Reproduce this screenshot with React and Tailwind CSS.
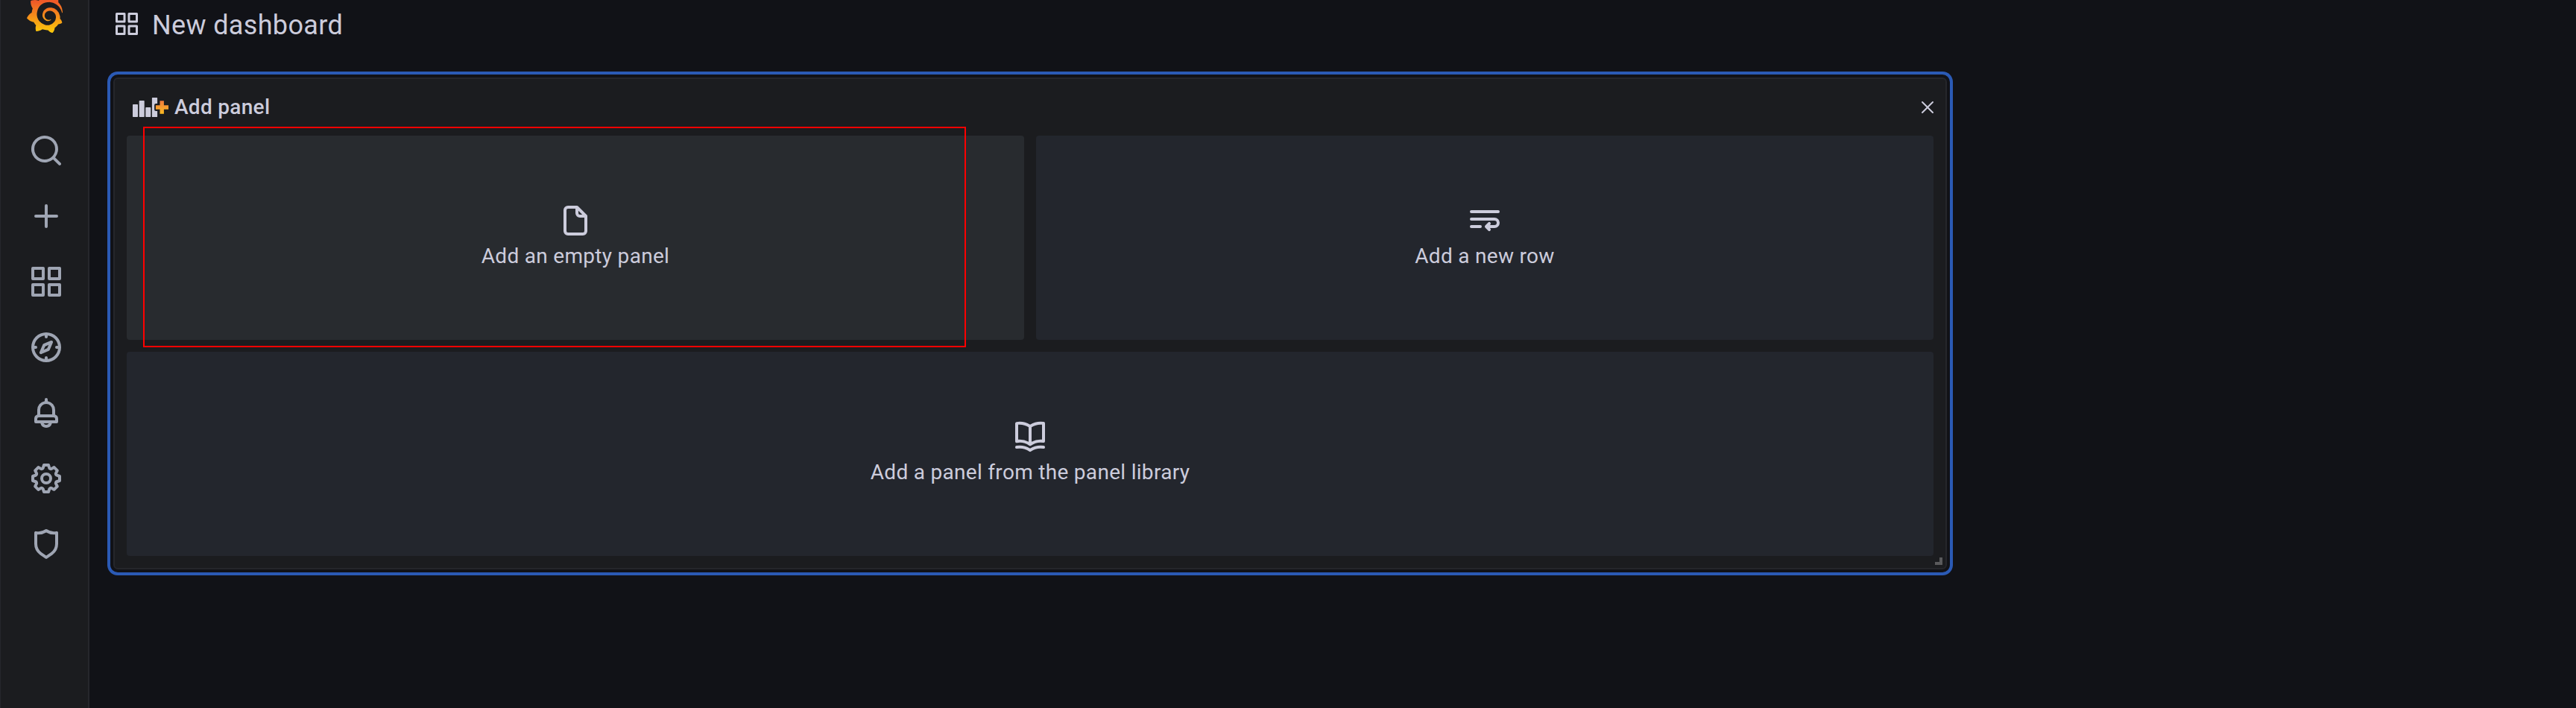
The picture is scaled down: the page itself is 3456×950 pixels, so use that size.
import React from "react";
import { SiGrafana } from "react-icons/si";

const PATHS = {
  search:
    "M21.71,20.29,18,16.61A9,9,0,1,0,16.61,18l3.68,3.68a1,1,0,0,0,1.42,0A1,1,0,0,0,21.71,20.29ZM11,18a7,7,0,1,1,7-7A7,7,0,0,1,11,18Z",
  plus: "M19,11H13V5a1,1,0,0,0-2,0v6H5a1,1,0,0,0,0,2h6v6a1,1,0,0,0,2,0V13h6a1,1,0,0,0,0-2Z",
  apps: "M10,13H3a1,1,0,0,0-1,1v7a1,1,0,0,0,1,1h7a1,1,0,0,0,1-1V14A1,1,0,0,0,10,13ZM9,20H4V15H9ZM21,2H14a1,1,0,0,0-1,1v7a1,1,0,0,0,1,1h7a1,1,0,0,0,1-1V3A1,1,0,0,0,21,2ZM20,9H15V4h5Zm1,4H14a1,1,0,0,0-1,1v7a1,1,0,0,0,1,1h7a1,1,0,0,0,1-1V14A1,1,0,0,0,21,13Zm-1,7H15V15h5ZM10,2H3A1,1,0,0,0,2,3v7a1,1,0,0,0,1,1h7a1,1,0,0,0,1-1V3A1,1,0,0,0,10,2ZM9,9H4V4H9Z",
  compass:
    "M12,2A10,10,0,1,0,22,12,10,10,0,0,0,12,2Zm1,17.93V19a1,1,0,0,0-2,0v.93A8,8,0,0,1,4.07,13H5a1,1,0,0,0,0-2H4.07A8,8,0,0,1,11,4.07V5a1,1,0,0,0,2,0V4.07A8,8,0,0,1,19.93,11H19a1,1,0,0,0,0,2h.93A8,8,0,0,1,13,19.93ZM15.14,7.55l-5,2.12a1,1,0,0,0-.52.52l-2.12,5a1,1,0,0,0,.21,1.1,1,1,0,0,0,.7.3.93.93,0,0,0,.4-.09l5-2.12a1,1,0,0,0,.52-.52l2.12-5a1,1,0,0,0-1.31-1.31Zm-2.49,5.1-2.28,1,1-2.28,2.28-1Z",
  bell: "M18,13.18V10a6,6,0,0,0-5-5.91V3a1,1,0,0,0-2,0V4.09A6,6,0,0,0,6,10v3.18A3,3,0,0,0,4,16v2a1,1,0,0,0,1,1H8.14a4,4,0,0,0,7.72,0H19a1,1,0,0,0,1-1V16A3,3,0,0,0,18,13.18ZM8,10a4,4,0,0,1,8,0v3H8Zm4,10a2,2,0,0,1-1.72-1h3.44A2,2,0,0,1,12,20Zm6-3H6V16a1,1,0,0,1,1-1H17a1,1,0,0,1,1,1Z",
  cog: "M21.32,9.55l-1.89-.63.89-1.78A1,1,0,0,0,20.13,6L18,3.87a1,1,0,0,0-1.15-.19l-1.78.89-.63-1.89A1,1,0,0,0,13.5,2h-3a1,1,0,0,0-.95.68L8.92,4.57,7.14,3.68A1,1,0,0,0,6,3.87L3.87,6a1,1,0,0,0-.19,1.15l.89,1.78-1.89.63A1,1,0,0,0,2,10.5v3a1,1,0,0,0,.68.95l1.89.63-.89,1.78A1,1,0,0,0,3.87,18L6,20.13a1,1,0,0,0,1.15.19l1.78-.89.63,1.89a1,1,0,0,0,.95.68h3a1,1,0,0,0,.95-.68l.63-1.89,1.78.89A1,1,0,0,0,18,20.13L20.13,18a1,1,0,0,0,.19-1.15l-.89-1.78,1.89-.63A1,1,0,0,0,22,13.5v-3A1,1,0,0,0,21.32,9.55ZM20,12.78l-1.2.4A2,2,0,0,0,17.64,16l.57,1.14-1.1,1.1L16,17.64a2,2,0,0,0-2.79,1.16l-.4,1.2H11.22l-.4-1.2A2,2,0,0,0,8,17.64l-1.14.57-1.1-1.1L6.36,16A2,2,0,0,0,5.2,13.18L4,12.78V11.22l1.2-.4A2,2,0,0,0,6.36,8L5.79,6.89l1.1-1.1L8,6.36A2,2,0,0,0,10.82,5.2l.4-1.2h1.56l.4,1.2A2,2,0,0,0,16,6.36l1.14-.57,1.1,1.1L17.64,8a2,2,0,0,0,1.16,2.79l1.2.4ZM12,8a4,4,0,1,0,4,4A4,4,0,0,0,12,8Zm0,6a2,2,0,1,1,2-2A2,2,0,0,1,12,14Z",
  shield:
    "M19.63,3.65a1,1,0,0,0-.84-.2,8,8,0,0,1-6.22-1.27,1,1,0,0,0-1.14,0A8,8,0,0,1,5.21,3.45a1,1,0,0,0-.84.2A1,1,0,0,0,4,4.43v7.45a9,9,0,0,0,3.77,7.33l3.65,2.6a1,1,0,0,0,1.16,0l3.65-2.6A9,9,0,0,0,20,11.88V4.43A1,1,0,0,0,19.63,3.65ZM18,11.88a7,7,0,0,1-2.93,5.7L12,19.77,8.93,17.58A7,7,0,0,1,6,11.88V5.58a10,10,0,0,0,6-1.39,10,10,0,0,0,6,1.39Z",
  file: "M20,8.94a1.31,1.31,0,0,0-.06-.27l0-.09a1.07,1.07,0,0,0-.19-.28h0l-6-6h0a1.07,1.07,0,0,0-.28-.19l-.09,0A.88.88,0,0,0,13.05,2H7A3,3,0,0,0,4,5V19a3,3,0,0,0,3,3H17a3,3,0,0,0,3-3V9S20,9,20,8.94ZM14,5.41,16.59,8H15a1,1,0,0,1-1-1ZM18,19a1,1,0,0,1-1,1H7a1,1,0,0,1-1-1V5A1,1,0,0,1,7,4h5V7a3,3,0,0,0,3,3h3Z",
  wrap: "M3,7H21a1,1,0,0,0,0-2H3A1,1,0,0,0,3,7ZM18.5,10H3a1,1,0,0,0,0,2H18.5a1.5,1.5,0,0,1,0,3H15.41l.3-.29a1,1,0,0,0-1.42-1.42l-2,2a1,1,0,0,0,0,1.42l2,2a1,1,0,0,0,1.42,0,1,1,0,0,0,0-1.42L15.41,17H18.5a3.5,3.5,0,0,0,0-7ZM9,15H3a1,1,0,0,0,0,2H9a1,1,0,0,0,0-2Z",
  book: "M21.17,2.06A13.1,13.1,0,0,0,19,1.87a12.94,12.94,0,0,0-7,2.05,12.94,12.94,0,0,0-7-2,13.1,13.1,0,0,0-2.17.19,1,1,0,0,0-.83,1v12a1,1,0,0,0,1.17,1,10.9,10.9,0,0,1,8.25,1.91l.12.07.11,0a.91.91,0,0,0,.7,0l.11,0,.12-.07A10.9,10.9,0,0,1,20.83,16,1,1,0,0,0,22,15V3A1,1,0,0,0,21.17,2.06ZM11,15.35a12.87,12.87,0,0,0-6-1.48c-.33,0-.66,0-1,0v-10a8.69,8.69,0,0,1,1,0,10.86,10.86,0,0,1,6,1.8Zm9-1.44c-.34,0-.67,0-1,0a12.87,12.87,0,0,0-6,1.48V5.67a10.86,10.86,0,0,1,6-1.8,8.69,8.69,0,0,1,1,0Zm1.17,4.15A13.1,13.1,0,0,0,19,17.87a12.94,12.94,0,0,0-7,2.05,12.94,12.94,0,0,0-7-2.05,13.1,13.1,0,0,0-2.17.19A1,1,0,0,0,2,19.21,1,1,0,0,0,3.17,20a10.9,10.9,0,0,1,8.25,1.91,1,1,0,0,0,1.16,0A10.9,10.9,0,0,1,20.83,20,1,1,0,0,0,22,19.21,1,1,0,0,0,21.17,18.06Z",
  times:
    "M13.41,12l6.3-6.29a1,1,0,1,0-1.42-1.42L12,10.59,5.71,4.29A1,1,0,0,0,4.29,5.71L10.59,12l-6.3,6.29a1,1,0,0,0,0,1.42,1,1,0,0,0,1.42,0L12,13.41l6.29,6.3a1,1,0,0,0,1.42,0,1,1,0,0,0,0-1.42Z",
};

function Icon({ name, className = "size-12" }) {
  return (
    <svg viewBox="0 0 24 24" fill="currentColor" className={className} aria-hidden="true">
      <path d={PATHS[name]} />
    </svg>
  );
}

function GrafanaLogo() {
  return (
    <>
      <svg className="absolute size-0" aria-hidden="true">
        <defs>
          <linearGradient id="logo-fill" x1="0" y1="0" x2="0" y2="1">
            <stop offset="0.2" stopColor="#f05a28" />
            <stop offset="1" stopColor="#fbca0a" />
          </linearGradient>
        </defs>
      </svg>
      <SiGrafana fill="url(#logo-fill)" className="-mt-2 ml-[33px] size-[52px] shrink-0" />
    </>
  );
}

function AddPanelIcon() {
  return (
    <svg viewBox="0 0 48 26" className="h-[26px] w-12" aria-hidden="true">
      <defs>
        <linearGradient id="plus-fill" x1="0" y1="0" x2="0" y2="1">
          <stop offset="0" stopColor="#f27b3c" />
          <stop offset="1" stopColor="#fbbc22" />
        </linearGradient>
      </defs>
      <g fill="#ccccdc">
        <rect x="0" y="9" width="7" height="17" rx="0.7" />
        <rect x="8.7" y="4" width="7" height="22" rx="0.7" />
        <rect x="17.3" y="13" width="7" height="13" rx="0.7" />
        <path d="M26.5 0h6a.6.6 0 0 1 .6.6V8h-2a2 2 0 0 0-2 2v6a2 2 0 0 0 2 2h2v7.4a.6.6 0 0 1-.6.6h-6a.6.6 0 0 1-.6-.6V.6a.6.6 0 0 1 .6-.6Z" />
      </g>
      <path d="M36.5 4.3h5.4v6H48v5.4h-6.1v6.1h-5.4v-6.1h-5.6v-5.4h5.6Z" fill="url(#plus-fill)" />
    </svg>
  );
}

const NAV = ["search", "plus", "apps", "compass", "bell", "cog", "shield"];

function Sidebar() {
  return (
    <nav className="flex h-full w-[120px] shrink-0 flex-col border-r-2 border-l border-[#26272c] bg-[#1b1c1f]">
      <GrafanaLogo />
      <div className="mt-[134px] ml-[37px] flex flex-col gap-10 text-[#9fa5b3]">
        {NAV.map((name) => (
          <Icon key={name} name={name} />
        ))}
      </div>
    </nav>
  );
}

function Card({ icon, label, className = "bg-[#23262d]" }) {
  return (
    <button className={`flex flex-col items-center rounded pt-[90px] ${className}`}>
      <Icon name={icon} />
      <span className="mt-0.5 text-[28px] leading-[44px] tracking-[0.3px]">{label}</span>
    </button>
  );
}

export default function App() {
  return (
    <div className="flex h-[950px] w-[3456px] overflow-hidden bg-[#111217] font-['Roboto',sans-serif] text-[#ccccdc]">
      <Sidebar />
      <main className="flex flex-col pl-8">
        <header className="flex h-[104px] items-start gap-4 pt-[14px]">
          <Icon name="apps" className="size-9" />
          <h1 className="text-[36px] leading-10 font-normal tracking-[0.35px]">New dashboard</h1>
        </header>
        <section className="relative flex h-[660px] w-[2460px] flex-col rounded-[6px] border-2 border-[#25262b] bg-[#1b1c1f] px-4 pb-4 shadow-[0_0_0_4px_#111217,0_0_0_8px_#2b5ab5]">
          <div className="flex h-[76px] items-center justify-between">
            <div className="flex items-center gap-2 pl-2">
              <AddPanelIcon />
              <h2 className="text-[28px] leading-10 font-medium tracking-[0.3px]">Add panel</h2>
            </div>
            <Icon name="times" className="-mr-1 size-6" />
          </div>
          <div className="grid h-[564px] grid-cols-2 grid-rows-2 gap-4">
            <Card icon="file" label="Add an empty panel" className="bg-[#282b2f]" />
            <Card icon="wrap" label="Add a new row" />
            <Card icon="book" label="Add a panel from the panel library" className="col-span-2 bg-[#23262d]" />
          </div>
          <div className="absolute top-16 left-[38px] h-[296px] w-[1104px] border-2 border-[#ff0000]" />
          <div className="absolute right-1 bottom-1 size-[10px] border-r-4 border-b-4 border-[#5a5a5c]" />
        </section>
      </main>
    </div>
  );
}
